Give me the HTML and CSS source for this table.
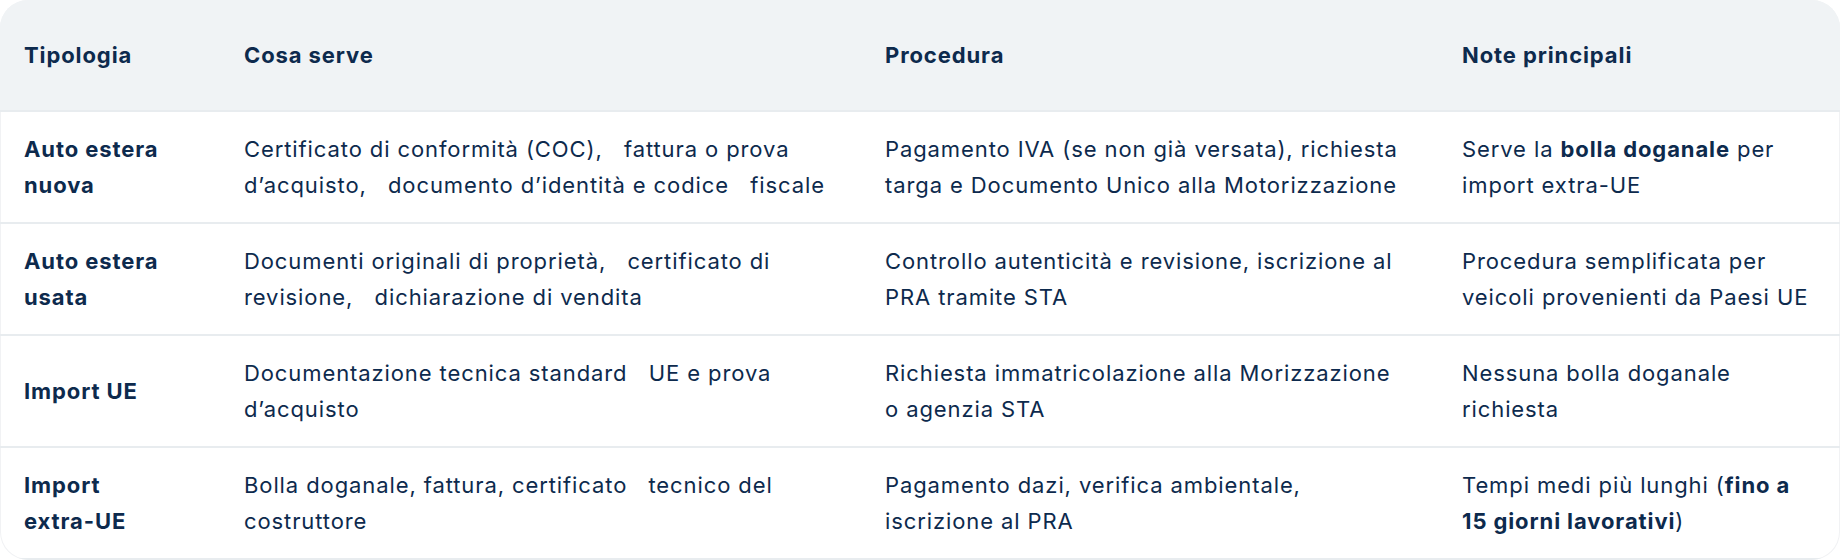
FILE: index.html
```html
<!DOCTYPE html>
<html lang="it">
<head>
<meta charset="utf-8">
<title>Tipologie di immatricolazione</title>
<link rel="stylesheet" href="styles.css">
</head>
<body>
<div class="card">
  <div class="row head">
    <div class="cell">Tipologia</div>
    <div class="cell">Cosa serve</div>
    <div class="cell">Procedura</div>
    <div class="cell">Note principali</div>
  </div>
  <div class="row">
    <div class="cell type">Auto estera<br>nuova</div>
    <div class="cell">Certificato di conformità (COC), &nbsp; fattura o prova<br>d’acquisto, &nbsp; documento d’identità e codice &nbsp; fiscale</div>
    <div class="cell">Pagamento IVA (se non già versata), richiesta<br>targa e Documento Unico alla Motorizzazione</div>
    <div class="cell">Serve la <strong>bolla doganale</strong> per<br>import extra-UE</div>
  </div>
  <div class="row">
    <div class="cell type">Auto estera<br>usata</div>
    <div class="cell">Documenti originali di proprietà, &nbsp; certificato di<br>revisione, &nbsp; dichiarazione di vendita</div>
    <div class="cell">Controllo autenticità e revisione, iscrizione al<br>PRA tramite STA</div>
    <div class="cell">Procedura semplificata per<br>veicoli provenienti da Paesi UE</div>
  </div>
  <div class="row">
    <div class="cell type">Import UE</div>
    <div class="cell">Documentazione tecnica standard &nbsp; UE e prova<br>d’acquisto</div>
    <div class="cell">Richiesta immatricolazione alla Morizzazione<br>o agenzia STA</div>
    <div class="cell">Nessuna bolla doganale<br>richiesta</div>
  </div>
  <div class="row">
    <div class="cell type">Import<br>extra-UE</div>
    <div class="cell">Bolla doganale, fattura, certificato &nbsp; tecnico del<br>costruttore</div>
    <div class="cell">Pagamento dazi, verifica ambientale,<br>iscrizione al PRA</div>
    <div class="cell">Tempi medi più lunghi (<strong>fino a<br>15 giorni lavorativi</strong>)</div>
  </div>
</div>
</body>
</html>
```

FILE: styles.css
```css
* { box-sizing: border-box; }
html, body { margin: 0; padding: 0; background: #ffffff; }
body {
  font-family: "Inter", "Noto Sans", sans-serif;
  color: #0d2a4d;
  font-size: 22px;
  letter-spacing: 0.9px;
}
.card {
  width: 1840px;
  height: 560px;
  border-radius: 28px;
  overflow: hidden;
  background: #ffffff;
  box-shadow: inset 0 0 0 1px #f1f2f4;
}
.row {
  display: grid;
  grid-template-columns: 220px 641px 577px 1fr;
  border-bottom: 2px solid #e8ecef;
  min-height: 112px;
}
.row.head {
  background: #f0f3f5;
  font-weight: 700;
}
.cell {
  align-self: center;
  padding: 19px 24px;
  line-height: 36px;
  white-space: nowrap;
}
.type { font-weight: 700; }
strong { font-weight: 700; }
```
